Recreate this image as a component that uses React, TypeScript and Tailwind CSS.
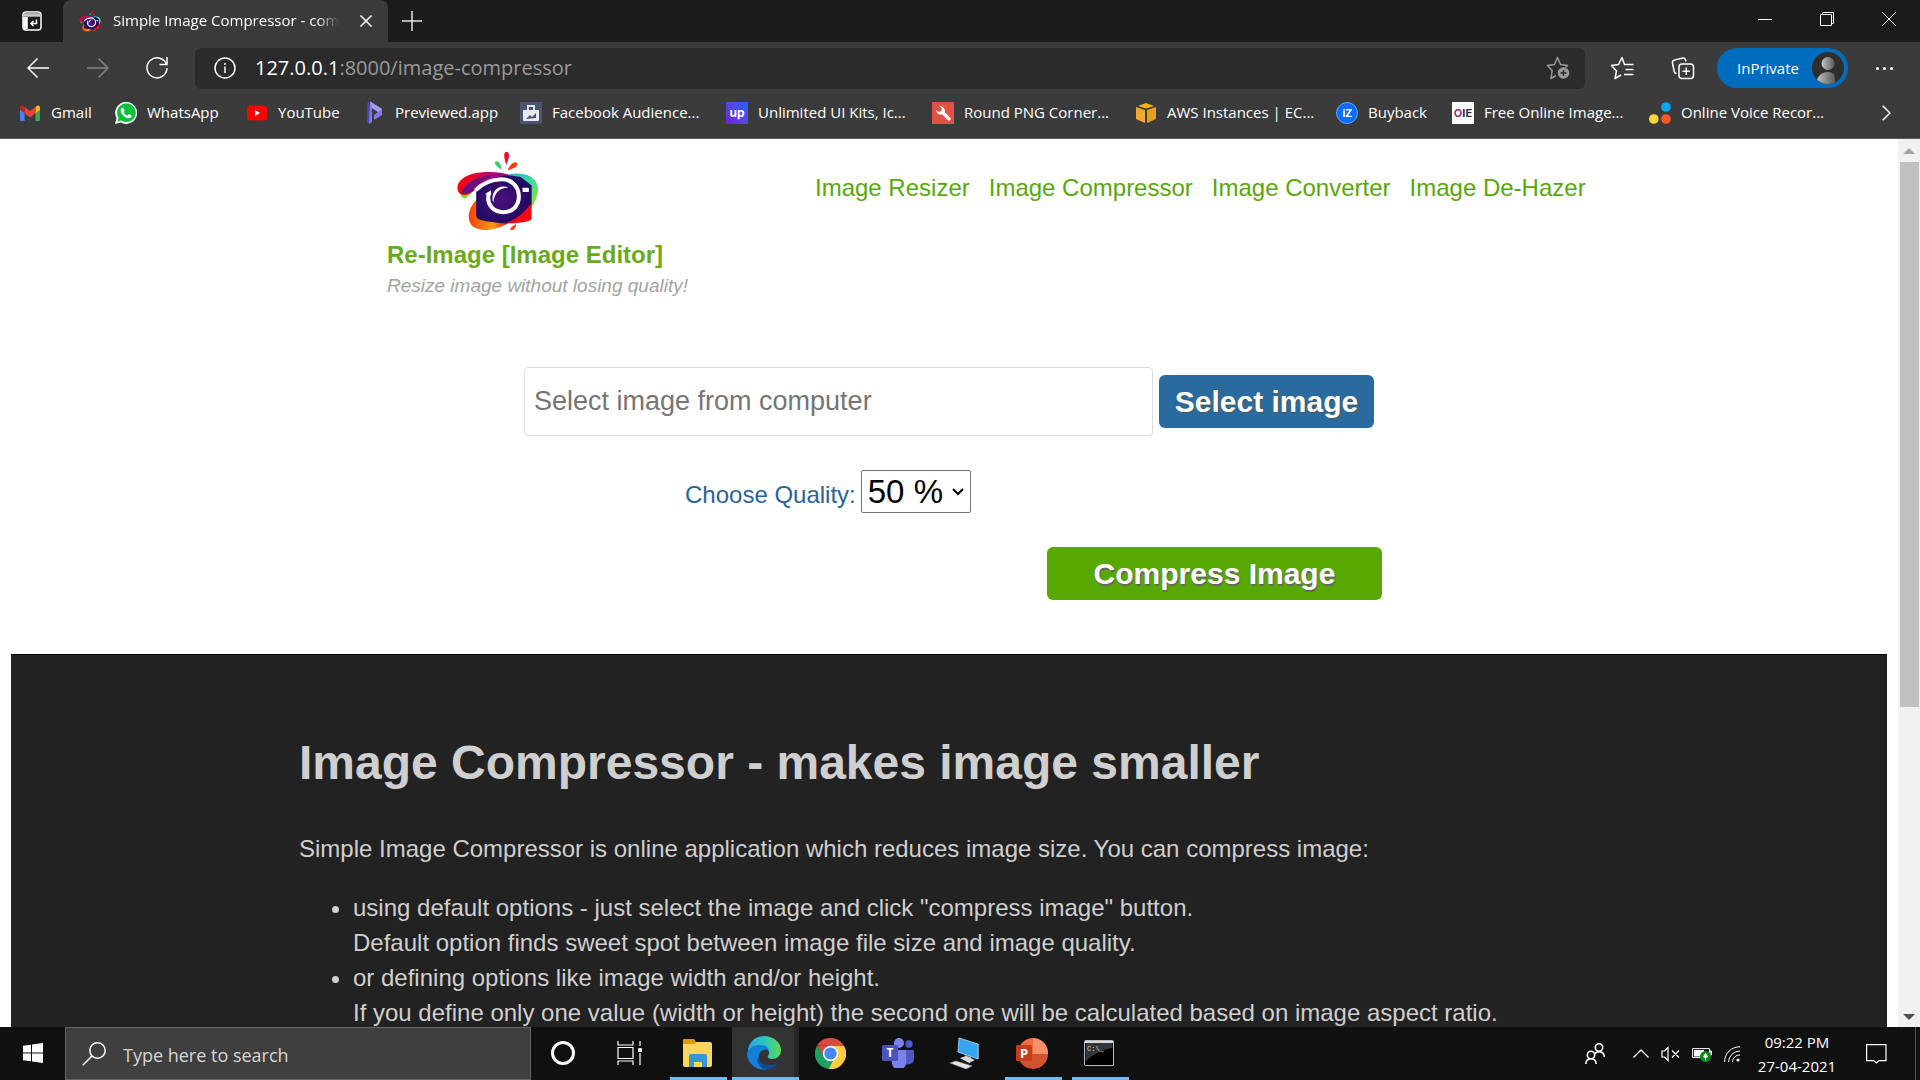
import type { ReactNode } from "react";

const bookmarks: { label: string; width: string; icon: ReactNode }[] = [
  {
    label: "Gmail",
    width: "w-24",
    icon: (
      <svg viewBox="0 0 24 20" className="w-5">
        <path d="M0 3.500v14.500a2 2 0 0 0 2 2h3.500V8z" fill="#4285f4" />
        <path d="M24 3.500v14.500a2 2 0 0 1-2 2h-3.500V8z" fill="#34a853" />
        <path d="M18.500 3v7L24 5.800V3.200C24 0 21 0 19.500 1.500z" fill="#fbbc04" />
        <path d="M5.500 10V2.300L12 7.200l6.500-4.900V10L12 15z" fill="#ea4335" />
        <path d="M0 3.200v2.600L5.500 10V2.300L4.500 1.500C3 0 0 0 0 3.200z" fill="#c5221f" />
      </svg>
    ),
  },
  {
    label: "WhatsApp",
    width: "w-[131px]",
    icon: (
      <svg viewBox="0 0 24 24" className="w-[22px]">
        <path d="M0 24l1.700-6.200A12 12 0 1 1 6.300 22.400z" fill="#fff" />
        <path d="M2.600 21.400l1.200-4.300A10.200 10.200 0 1 1 7 20.300z" fill="#0abf3a" />
        <path d="M8.200 6.300c-.9 0-2 1.200-2 2.900 0 3.200 4.700 8.500 9 8.500 1.700 0 3.100-1.300 3-3l-3-1.500-1.500 1.700c-2-.8-3.500-2.200-4.400-4L10.500 9.500 9.200 6.400z" fill="#fff" />
      </svg>
    ),
  },
  {
    label: "YouTube",
    width: "w-[117px]",
    icon: (
      <svg viewBox="0 0 20 16" className="w-5">
        <rect width="20" height="15" y=".5" rx="3.500" fill="#f00" />
        <path d="M8 5l5 3-5 3z" fill="#fff" />
      </svg>
    ),
  },
  {
    label: "Previewed.app",
    width: "w-[157px]",
    icon: (
      <svg viewBox="0 0 17 24" className="h-6">
        <path d="M2 1l4 2v18l-3 2-2-1.500V3z" fill="#4a43a8" />
        <path d="M4 .5L16 8v6l-8 5v-5l4-3-6-4v14l-3 2z" fill="#7f79e6" />
        <path d="M4 .5L16 8l-4 3-6-4z" fill="#a29df5" />
      </svg>
    ),
  },
  {
    label: "Facebook Audience...",
    width: "w-[206px]",
    icon: (
      <svg viewBox="0 0 22 22" className="w-[22px]">
        <rect width="22" height="22" fill="#4a5470" />
        <path d="M8 8V4h6v4" fill="none" stroke="#e8eaee" strokeWidth="2" />
        <rect x="3" y="8" width="16" height="11" rx="1" fill="#e8eaee" />
        <path d="M6 17l4-4 2 2 4-4v5z" fill="#4a5470" />
      </svg>
    ),
  },
  {
    label: "Unlimited UI Kits, Ic...",
    width: "w-[206px]",
    icon: (
      <span className="flex size-[22px] items-center justify-center bg-linear-to-tr from-[#6a1fd8] to-[#1d62f5] font-[Inter] text-xs font-bold text-white">
        up
      </span>
    ),
  },
  {
    label: "Round PNG Corner...",
    width: "w-[203px]",
    icon: (
      <svg viewBox="0 0 22 22" className="w-[22px]">
        <rect width="22" height="22" fill="#e05243" />
        <path d="M4 8l2.500 2 2.500-1 .8-2.600L7.500 4a5 5 0 0 1 5.300 6l5.400 5.700a1.700 1.700 0 0 1-2.500 2.400L10.400 12.400A5 5 0 0 1 4 8z" fill="#fff" />
      </svg>
    ),
  },
  {
    label: "AWS Instances | EC...",
    width: "w-[201px]",
    icon: (
      <svg viewBox="0 0 22 22" className="w-[22px]">
        <path d="M11 1l8 3-8 2.500L3 4z" fill="#f9b50b" />
        <path d="M1 5l9 3v13l-9-4z" fill="#eeab2b" />
        <path d="M21 5l-9 3v13l9-4z" fill="#e79f1c" />
      </svg>
    ),
  },
  {
    label: "Buyback",
    width: "w-[116px]",
    icon: (
      <span className="flex size-[22px] items-center justify-center rounded-full border border-[#5aa8ff] bg-[#0a6cff] text-[11px] font-bold text-white">
        iZ
      </span>
    ),
  },
  {
    label: "Free Online Image...",
    width: "w-[197px]",
    icon: (
      <span className="flex size-[22px] items-center justify-center bg-white font-[Inter] text-[11px] font-bold text-[#2d2a3d]">
        <span className="text-[#a0306a]">O</span>IE
      </span>
    ),
  },
  {
    label: "Online Voice Recor...",
    width: "w-[190px]",
    icon: (
      <svg viewBox="0 0 22 22" className="w-[22px]">
        <circle cx="17" cy="5" r="4.800" fill="#03a9f4" />
        <circle cx="4.800" cy="17" r="4.800" fill="#fdd835" />
        <circle cx="17" cy="17" r="4.800" fill="#ff5722" />
      </svg>
    ),
  },
];

function Logo({ className, id }: { className: string; id: string }) {
  return (
    <svg viewBox="8 2 248 244" className={className} aria-hidden="true">
      <defs>
        <linearGradient id={id + "a"} x1="0" x2="1">
          <stop offset="0" stopColor="#f5080f" />
          <stop offset=".3" stopColor="#e00a30" />
          <stop offset=".7" stopColor="#a3087c" />
          <stop offset="1" stopColor="#8a0a7a" />
        </linearGradient>
        <linearGradient id={id + "b"} x1="0" x2="1" y2="1">
          <stop offset="0" stopColor="#1fb4c4" />
          <stop offset=".5" stopColor="#3ddc9c" />
          <stop offset="1" stopColor="#a3e021" />
        </linearGradient>
        <linearGradient id={id + "c"} x1="0" x2="1">
          <stop offset="0" stopColor="#f5400c" />
          <stop offset=".6" stopColor="#ff9a0a" />
          <stop offset="1" stopColor="#f5080f" />
        </linearGradient>
        <radialGradient id={id + "d"} cx=".45" cy=".5" r=".6">
          <stop offset="0" stopColor="#4a1279" />
          <stop offset="1" stopColor="#1c0860" />
        </radialGradient>
      </defs>
      <path d="M158 7c9 1 9 13 6 22l-6 17c-6-14-11-38 0-39z" fill="#e8102a" />
      <path d="M125 36c7-3 13 4 16 11l3 13c-11-5-25-18-19-24z" fill="#3ccf6a" />
      <path d="M189 40c5 8-5 15-12 17l-15 6c3-12 17-31 27-23z" fill="#f2400f" />
      <path d="M160 76C195 66 240 72 251 108C255 130 246 156 231 174L228 108L195 84z" fill={"url(#" + id + "b)"} />
      <path d="M22 126C20 149 38 149 46 138C60 123 70 115 90 101C66 106 50 128 22 126z" fill="#86dd1e" />
      <path d="M70 150C44 174 38 210 58 230C85 248 125 240 165 219L70 204z" fill={"url(#" + id + "c)"} />
      <path d="M68 120C90 96 130 78 160 76L200 82L233 108V165C215 190 190 215 160 220C120 219 90 213 74 207Q68 204 68 198z" fill={"url(#" + id + "d)"} />
      <path d="M233 158V204Q233 211 222 214C200 219 180 221 155 220C190 206 215 186 233 158z" fill="#f5080f" />
      <path d="M14 125C4 93 42 72 80 69C115 66 145 68 168 77C125 79 92 95 68 117C48 136 24 145 14 125z" fill={"url(#" + id + "a)"} />
      <path d="M22 130C38 98 72 80 118 77C96 88 78 101 66 116C50 131 36 136 22 130z" fill="#6d0f80" />
      <path d="M106 130C96 166 122 187 149 187C178 187 196 166 195 139C194 108 170 88 143 89C112 90 86 102 66 122" fill="none" stroke="#fff" strokeWidth="12" />
      <path d="M94 134L112 122L113 136z" fill="#fff" />
      <path d="M119 160C108 126 136 102 164 114C138 113 121 130 119 160z" fill="#fff" />
      <rect x="206" y="114" width="19" height="13" rx="2" fill="#fff" />
      <path d="M170 240c-2-8 8-13 17-18-1 12-6 20-17 18z" fill="#ef4712" />
    </svg>
  );
}

function TabStrip() {
  return (
    <div className="flex h-[42px] shrink-0 items-stretch bg-[#1b1b1b]">
      <button aria-label="Tab actions" className="flex w-[63px] items-center justify-center">
        <svg viewBox="0 0 20 20" className="size-5" fill="none" stroke="#fff" strokeWidth="1.500">
          <rect x="1" y="1" width="18" height="18" rx="3" />
          <path d="M1.500 4h17" stroke="#c8c8c8" strokeWidth="3.500" />
          <path d="M3.500 6v12" strokeWidth="4.500" />
          <path d="M14.500 8.500v4H9M11.500 10L9 12.500l2.500 2.500" />
        </svg>
      </button>
      <div className="flex w-[325px] items-center rounded-t-lg bg-[#3b3b3b] pl-4 pr-2.5">
        <Logo className="size-[22px] shrink-0" id="fav" />
        <span className="ml-3 whitespace-nowrap pb-0.5 text-[15px] text-white [mask-image:linear-gradient(to_right,black_90%,transparent)]">
          Simple Image Compressor - com
        </span>
        <button aria-label="Close tab" className="ml-auto flex size-6 items-center justify-center">
          <svg viewBox="0 0 12 12" className="size-3" stroke="#fff" strokeWidth="1.500">
            <path d="M.5.5l11 11M11.500.5l-11 11" />
          </svg>
        </button>
      </div>
      <button aria-label="New tab" className="flex w-12 items-center justify-center">
        <svg viewBox="0 0 20 20" className="size-5" stroke="#e4e4e4" strokeWidth="1.500">
          <path d="M10 0v20M0 10h20" />
        </svg>
      </button>
      <div className="ml-auto flex pb-1">
        <button aria-label="Minimize" className="flex w-[62px] items-center justify-center">
          <svg viewBox="0 0 14 14" className="size-3.5" stroke="#fff">
            <path d="M0 7.500h14" />
          </svg>
        </button>
        <button aria-label="Restore" className="flex w-[62px] items-center justify-center">
          <svg viewBox="0 0 14 14" className="size-3.5" stroke="#fff" fill="none">
            <path d="M.5 2.500h11v11H.5zM2.500 2.500v-2h11v11h-2" />
          </svg>
        </button>
        <button aria-label="Close window" className="flex w-[62px] items-center justify-center">
          <svg viewBox="0 0 14 14" className="size-3.5" stroke="#fff">
            <path d="M0 0l14 14M14 0L0 14" />
          </svg>
        </button>
      </div>
    </div>
  );
}

function Toolbar() {
  return (
    <div className="flex h-[52px] shrink-0 items-center bg-[#3b3b3b] text-white">
      <button aria-label="Back" className="ml-2 flex w-[60px] justify-center">
        <svg viewBox="0 0 22 20" className="w-[22px]" fill="none" stroke="#fff" strokeWidth="1.500">
          <path d="M22 10H1M10.500.5L1 10l9.500 9.500" />
        </svg>
      </button>
      <button aria-label="Forward" disabled className="flex w-[60px] justify-center">
        <svg viewBox="0 0 22 20" className="w-[22px]" fill="none" stroke="#858585" strokeWidth="1.500">
          <path d="M0 10h21M11.500.5L21 10l-9.500 9.500" />
        </svg>
      </button>
      <button aria-label="Refresh" className="flex w-[58px] justify-center">
        <svg viewBox="0 0 22 22" className="w-[22px]" fill="none" stroke="#fff" strokeWidth="1.500">
          <path d="M20.600 8A10 10 0 1 0 21 11M21 0v7.500h-7.500" />
        </svg>
      </button>
      <div className="ml-[9px] flex h-[41px] flex-1 items-center rounded-md bg-[#2b2b2b] pl-[19px] pr-[15px]">
        <svg viewBox="0 0 22 22" className="w-[22px]" fill="none" stroke="#fff" strokeWidth="1.500">
          <circle cx="11" cy="11" r="10" />
          <path d="M11 9.500V16M11 6v2" />
        </svg>
        <span className="ml-[19px] flex-1 text-xl text-[#9a9a9a]">
          <span className="text-white">127.0.0.1</span>:8000/image-compressor
        </span>
        <button aria-label="Add to favorites">
          <svg viewBox="0 0 24 24" className="w-6" fill="none" stroke="#9a9a9a" strokeWidth="1.500" strokeLinejoin="round">
            <path d="M10 19.500l-5 3 1.200-7.800L1.500 9.500l7-1L11.500 1.500l3 7 7 1-2 2" />
            <circle cx="17.500" cy="17" r="5.800" fill="#9a9a9a" stroke="none" />
            <path d="M17.500 14v6M14.500 17h6" stroke="#2b2b2b" />
          </svg>
        </button>
      </div>
      <button aria-label="Favorites" className="flex w-[74px] justify-center">
        <svg viewBox="0 0 24 24" className="w-6" fill="none" stroke="#fff" strokeWidth="1.500" strokeLinejoin="round">
          <path d="M14.500 8.500L12 1.500 8.500 8.500 1.500 9.500l5 5.500-1.500 7.500 6-3.500" />
          <path d="M14 8.500h9.500M15.500 13.500h8M14 18.500h9.500" />
        </svg>
      </button>
      <button aria-label="Collections" className="flex w-12 justify-center">
        <svg viewBox="0 0 24 24" className="w-6" fill="none" stroke="#fff" strokeWidth="1.500">
          <path d="M5.500 17.500c-1.500 0-2-1-2.300-2L1.500 7c-.3-1.500.5-2.500 2-3l8.500-2c2-.4 2.500 1 3 3.500" />
          <rect x="8" y="8" width="14.500" height="14.500" rx="3" />
          <path d="M15.250 11.500v7.500M11.500 15.250H19" />
        </svg>
      </button>
      <button className="ml-2.5 flex h-10 w-[131px] items-center justify-between rounded-full bg-[#006cbe] pl-5 pr-1 text-[15px]">
        InPrivate
        <svg viewBox="0 0 32 32" className="size-8">
          <defs>
            <linearGradient id="person">
              <stop offset="0" stopColor="#c5c2bf" />
              <stop offset="1" stopColor="#5c5a58" />
            </linearGradient>
            <clipPath id="round">
              <circle cx="16" cy="16" r="16" />
            </clipPath>
          </defs>
          <circle cx="16" cy="16" r="16" fill="#2f2e2d" />
          <g clipPath="url(#round)" fill="url(#person)">
            <circle cx="16" cy="11.500" r="6.500" />
            <path d="M4.500 32c0-7 4-12 11.500-12 4 0 7 2 7 6v6z" />
          </g>
        </svg>
      </button>
      <button aria-label="Settings and more" className="flex w-[72px] justify-center gap-1">
        <span className="size-[3px] rounded-full bg-white" />
        <span className="size-[3px] rounded-full bg-white" />
        <span className="size-[3px] rounded-full bg-white" />
      </button>
    </div>
  );
}

function BookmarksBar() {
  return (
    <nav aria-label="Bookmarks" className="flex h-[45px] shrink-0 items-start border-b border-[#5c5c5c] bg-[#3b3b3b] pl-[19px] pt-2 text-[15px] text-white">
      {bookmarks.map((b) => (
        <a key={b.label} href="#" className={"flex h-[22px] shrink-0 items-center gap-2.5 whitespace-nowrap " + b.width}>
          <span className="flex w-[22px] shrink-0 items-center justify-center">{b.icon}</span>
          <span className="pb-0.5">{b.label}</span>
        </a>
      ))}
      <button aria-label="More bookmarks" className="ml-auto mr-[29px] flex h-[22px] items-center">
        <svg viewBox="0 0 9 16" className="h-4" fill="none" stroke="#fff" strokeWidth="1.500">
          <path d="M.7.7L8 8l-7.300 7.300" />
        </svg>
      </button>
    </nav>
  );
}

function Page() {
  return (
    <main className="min-w-0 flex-1 overflow-hidden bg-white font-['Liberation_Sans',Arial,sans-serif] text-2xl">
      <header className="flex pl-[387px] pt-[11px]">
        <div className="w-[428px]">
          <Logo className="ml-[69px] h-[82px]" id="logo" />
          <p className="mt-[9px] font-bold leading-7 text-[#6aaa1a]">Re-Image [Image Editor]</p>
          <p className="mt-[5px] text-[19px] italic leading-6 text-[#a3a3a3]">Resize image without losing quality!</p>
        </div>
        <nav aria-label="Tools" className="flex gap-[19px] whitespace-nowrap pt-6 leading-7 text-[#58a80c]">
          <a href="#">Image Resizer</a>
          <a href="#">Image Compressor</a>
          <a href="#">Image Converter</a>
          <a href="#">Image De-Hazer</a>
        </nav>
      </header>

      <form className="ml-[524px] mt-[69px] w-[858px]">
        <div className="flex items-center gap-1.5">
          <input
            type="text"
            aria-label="Image file"
            placeholder="Select image from computer"
            className="h-[69px] w-[629px] rounded-sm border border-[#dcdcdc] px-[9px] text-[27px] placeholder:text-[#757575]"
          />
          <button type="button" className="h-[53px] w-[215px] rounded-md bg-[#2a6b9f] text-3xl font-bold text-white [text-shadow:1px_1px_1px_#555]">
            Select image
          </button>
        </div>
        <div className="ml-[161px] mt-[34px] flex items-end gap-[5px]">
          <label htmlFor="quality" className="pb-1 leading-7 text-[#2a6496]">
            Choose Quality:
          </label>
          <div className="relative">
            <select id="quality" defaultValue="50" className="h-[43px] w-[110px] appearance-none rounded-xs border border-[#767676] bg-white pl-1.5 text-[33px] leading-10 text-black">
              <option value="50">50 %</option>
            </select>
            <svg viewBox="0 0 12 8" className="pointer-events-none absolute right-[7px] top-[18px] w-3" fill="none" stroke="#000" strokeWidth="2">
              <path d="M1 1l5 5 5-5" />
            </svg>
          </div>
        </div>
        <button type="button" className="ml-auto mt-[34px] block h-[53px] w-[335px] rounded-md bg-[#57a800] text-3xl font-bold text-white [text-shadow:1px_2px_1px_#666]">
          Compress Image
        </button>
      </form>

      <section className="mx-[11px] mt-[54px] border-t border-black bg-[#222] pb-16 pl-72 pt-20 text-[#cfcfcf]">
        <h1 className="text-5xl font-bold leading-14">Image Compressor - makes image smaller</h1>
        <p className="mt-10 leading-[35px]">
          Simple Image Compressor is online application which reduces image size. You can compress image:
        </p>
        <ul className="mt-6 list-disc pl-[54px] leading-[35px]">
          <li>
            using default options - just select the image and click "compress image" button.
            <br />
            Default option finds sweet spot between image file size and image quality.
          </li>
          <li>
            or defining options like image width and/or height.
            <br />
            If you define only one value (width or height) the second one will be calculated based on image aspect ratio.
          </li>
        </ul>
      </section>
    </main>
  );
}

function Scrollbar() {
  return (
    <div className="flex w-[22px] shrink-0 flex-col items-center bg-[#f1f1f1]">
      <svg viewBox="0 0 12 6" className="mb-2 mt-[9px] w-3 shrink-0" fill="#a3a3a3">
        <path d="M6 0l6 6H0z" />
      </svg>
      <div className="h-[545px] w-[19px] bg-[#c1c1c1]" />
      <svg viewBox="0 0 12 6" className="mb-[7px] mt-auto w-3 shrink-0" fill="#505050">
        <path d="M6 6L0 0h12z" />
      </svg>
    </div>
  );
}

const apps: { name: string; state: string; icon: ReactNode }[] = [
  {
    name: "Cortana",
    state: "",
    icon: (
      <svg viewBox="0 0 24 24" className="size-6" fill="none">
        <circle cx="12" cy="12" r="10.500" stroke="#fff" strokeWidth="3" />
      </svg>
    ),
  },
  {
    name: "Task View",
    state: "",
    icon: (
      <svg viewBox="0 0 25 24" className="w-[25px]" fill="none" stroke="#fff" strokeWidth="1.200">
        <path d="M1 0v4h15V0M1 24v-4h15v4M1 6.500h15v11H1zM23 0v5M23 12v12" />
        <rect x="21.800" y="7.800" width="2.600" height="2.600" fill="#fff" />
      </svg>
    ),
  },
  {
    name: "File Explorer",
    state: "open",
    icon: (
      <svg viewBox="0 0 30 30" className="w-[30px]">
        <path d="M1 2q0-1 1-1h10l2 3-2 3H1z" fill="#d99a06" />
        <path d="M1 6h11l2-2h14q2 0 2 2v21q0 2-2 2H3q-2 0-2-2z" fill="#ffd55c" />
        <path d="M7 29V18q0-2 2-2h14q2 0 2 2v11h-5v-5h-8v5z" fill="#3b93db" />
      </svg>
    ),
  },
  {
    name: "Microsoft Edge",
    state: "active",
    icon: (
      <svg viewBox="0 0 34 34" className="w-[34px]">
        <defs>
          <linearGradient id="edgeTop">
            <stop offset="0" stopColor="#2aa5e0" />
            <stop offset=".5" stopColor="#2cc3c8" />
            <stop offset="1" stopColor="#5fd84e" />
          </linearGradient>
        </defs>
        <path d="M1 13C3 5 9 0 17 0c10 0 17 7 17 14 0 6-4 9-9 9-4 0-5-2-4-3 3-5-1-9-6-9-6 0-12 3-14 8z" fill="url(#edgeTop)" />
        <path d="M0 17C2 11 8 9 13 9c6 0 9 3 9 6-4-4-10 0-10 6 0 7 5 11 8 12.500C10 35 0 28 0 17z" fill="#1280d8" />
        <path d="M12 20c-1 5 4 9 11 9 3 0 6-1 8-2-4 6-9 7-13 6.500C11 31 9 24 12 20z" fill="#124a91" />
      </svg>
    ),
  },
  {
    name: "Google Chrome",
    state: "",
    icon: (
      <svg viewBox="0 0 32 32" className="w-[31px]">
        <path d="M2.100 8A16 16 0 0 1 29.900 8H16z" fill="#dc4a3d" />
        <path d="M2.100 8A16 16 0 0 0 14 32l8-12.500L9.500 19z" fill="#1da15f" />
        <path d="M29.900 8A16 16 0 0 1 14 32l9-16-7-8z" fill="#ffcd40" />
        <path d="M2.100 8L10 20l6-12z" fill="#dc4a3d" />
        <circle cx="16" cy="16" r="8" fill="#f1f1f1" />
        <circle cx="16" cy="16" r="6.300" fill="#4587f4" />
      </svg>
    ),
  },
  {
    name: "Microsoft Teams",
    state: "",
    icon: (
      <svg viewBox="0 0 32 30" className="w-8">
        <circle cx="27" cy="6" r="3.700" fill="#5059c9" />
        <path d="M20 12h11q1 0 1 1v8a6 6 0 0 1-10 4z" fill="#5059c9" />
        <circle cx="17" cy="5" r="5" fill="#7b83eb" />
        <path d="M9 12h15v11a7 7 0 0 1-14 3z" fill="#7b83eb" />
        <rect y="7" width="16" height="16" rx="1.500" fill="#4b53bc" />
        <text x="8" y="19" textAnchor="middle" fontSize="12" fontWeight="700" fill="#fff">T</text>
      </svg>
    ),
  },
  {
    name: "Remote Desktop",
    state: "",
    icon: (
      <svg viewBox="0 0 32 32" className="w-8">
        <path d="M10 1l19 6v15l-20-7z" fill="#35a7f2" stroke="#b9dcf5" strokeWidth=".8" />
        <path d="M29 7l1 .5v14l-1 .5z" fill="#7f8b95" />
        <path d="M16 18l6 2v3l-6-2z" fill="#8d959c" />
        <path d="M11 21l6-2 9 4-6 3z" fill="#d5dade" />
        <path d="M1 26l6-2 16 5-6 3z" fill="#e5e8ea" stroke="#8d959c" strokeWidth=".6" />
      </svg>
    ),
  },
  {
    name: "PowerPoint",
    state: "open",
    icon: (
      <svg viewBox="0 0 32 32" className="w-8">
        <path d="M17 1A15 15 0 0 0 2 17h15z" fill="#ed6c47" />
        <path d="M17 1a15 15 0 0 1 15 16H17z" fill="#ff8f6b" />
        <path d="M2 17h30a15 15 0 0 1-30 0z" fill="#d35230" />
        <rect y="8" width="16" height="16" rx="1.500" fill="#c43e1c" />
        <text x="8" y="20.500" textAnchor="middle" fontSize="13" fontWeight="700" fill="#fff">P</text>
      </svg>
    ),
  },
  {
    name: "Command Prompt",
    state: "open",
    icon: (
      <svg viewBox="0 0 30 26" className="w-[30px]">
        <rect x=".5" y=".5" width="29" height="25" rx="1" fill="#000" stroke="#b8bcc0" />
        <path d="M1 1h28v2H1z" fill="#d8dade" />
        <path d="M1.500 3h27v5C18 10 8 14 1.500 22z" fill="#34373a" />
        <text x="3" y="11" fontSize="7" fill="#ddd" fontFamily="Liberation Mono">C:\_</text>
      </svg>
    ),
  },
];

const cellClass: Record<string, string> = {
  "": "border-transparent",
  open: "mx-[5px] border-[#76b9ed]",
  active: "border-[#76b9ed] bg-linear-to-r from-[#333] from-92% to-[#262626] to-92%",
};

function Taskbar() {
  return (
    <footer className="flex h-[53px] shrink-0 bg-[#101010] text-white">
      <button aria-label="Start" className="flex w-[65px] items-center justify-center pb-0.5">
        <svg viewBox="0 0 20 20" className="size-5" fill="#fff">
          <path d="M0 2.800L8 1.700v7.800H0zM9 1.500L20 0v9.500H9zM0 10.500h8v7.800L0 17.200zM9 10.500h11V20L9 18.500z" />
        </svg>
      </button>
      <label className="flex w-[466px] items-center border border-[#666] bg-[#3f3f3f] pl-4">
        <svg viewBox="0 0 24 24" className="size-6" fill="none" stroke="#fff" strokeWidth="1.500">
          <circle cx="15.500" cy="8.500" r="7.700" />
          <path d="M10 14L.7 23.300" />
        </svg>
        <input
          type="search"
          aria-label="Search"
          placeholder="Type here to search"
          className="ml-[17px] w-80 bg-transparent pt-0.5 text-lg placeholder:text-[#d6d6d6]"
        />
      </label>
      {apps.map((a) => (
        <div key={a.name} className="flex w-[67px] items-stretch">
          <button aria-label={a.name} className={"flex flex-1 items-center justify-center border-b-3 pr-1 pt-0.5 " + cellClass[a.state]}>
            {a.icon}
          </button>
        </div>
      ))}
      <div className="ml-auto flex items-center">
        <button aria-label="People" className="mr-7">
          <svg viewBox="0 0 20 22" className="w-5" fill="none" stroke="#fff" strokeWidth="1.600">
            <circle cx="14" cy="4.500" r="3.700" />
            <path d="M10 10.500c3-3 9-2.500 9.300 3.500" />
            <circle cx="6" cy="12" r="3.700" />
            <path d="M.8 21c.5-7 9.900-7 10.400 0" />
          </svg>
        </button>
        <button aria-label="Show hidden icons" className="mr-3">
          <svg viewBox="0 0 16 9" className="w-4" fill="none" stroke="#fff" strokeWidth="1.300">
            <path d="M.5 8.500L8 1l7.500 7.500" />
          </svg>
        </button>
        <button aria-label="Volume muted" className="mr-3">
          <svg viewBox="0 0 19 16" className="w-[19px]" fill="none" stroke="#fff" strokeWidth="1.200">
            <path d="M1 5v6h2.500L7 14.500v-13L3.500 5zM11 4.500l7 7M18 4.500l-7 7" />
          </svg>
        </button>
        <button aria-label="Battery" className="mr-3">
          <svg viewBox="0 0 20 16" className="w-5">
            <path d="M.6 2.600h17v9H.6zM18 5h1.500v4H18z" fill="none" stroke="#fff" />
            <path d="M2 4h10v6.500H2z" fill="#fff" />
            <circle cx="13.500" cy="10.500" r="5.500" fill="#0e8a16" />
            <path d="M13.500 7l2.500 3.500-2.500 2-2.500-2zM13 12h1v2.500h-1z" fill="#fff" />
          </svg>
        </button>
        <button aria-label="Network" className="mr-4">
          <svg viewBox="0 0 16 16" className="w-4" fill="none" stroke="#fff">
            <path d="M.6 16A15 15 0 0 1 16 .8M4.500 16A11.500 11.500 0 0 1 16 5M8.500 16A7 7 0 0 1 16 9" />
            <circle cx="14" cy="14" r="1.600" fill="#fff" stroke="none" />
          </svg>
        </button>
        <div className="w-[82px] text-center text-[15px] leading-6">
          <div className="whitespace-nowrap">09:22 PM</div>
          <div className="whitespace-nowrap">27-04-2021</div>
        </div>
        <button aria-label="Notifications" className="ml-7 mr-7">
          <svg viewBox="0 0 21 20" className="w-[21px]" fill="none" stroke="#fff" strokeWidth="1.200">
            <path d="M.6.600h19.400v16H13L10.300 19l-2.700-2.400h-7z" />
          </svg>
        </button>
        <div className="mr-1 h-full w-px bg-[#555]" />
      </div>
    </footer>
  );
}

export default function App() {
  return (
    <div className="flex h-screen flex-col overflow-hidden font-['Open_Sans','Noto_Sans',sans-serif]">
      <TabStrip />
      <Toolbar />
      <BookmarksBar />
      <div className="flex min-h-0 flex-1">
        <Page />
        <Scrollbar />
      </div>
      <Taskbar />
    </div>
  );
}
